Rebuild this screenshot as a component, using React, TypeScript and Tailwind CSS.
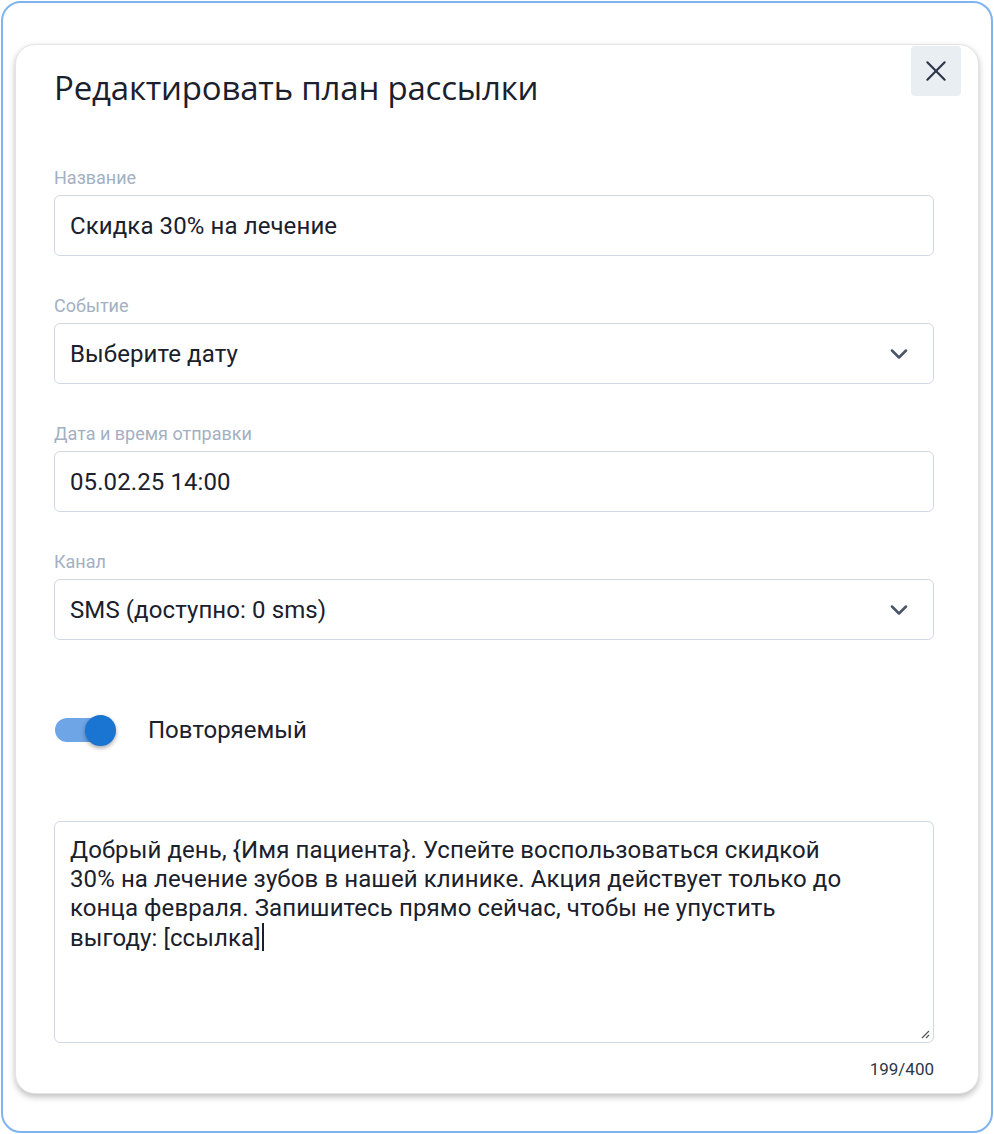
import { useState } from 'react'

const MESSAGE =
  'Добрый день, {Имя пациента}. Успейте воспользоваться скидкой 30% на лечение зубов в нашей клинике. Акция действует только до конца февраля. Запишитесь прямо сейчас, чтобы не упустить выгоду: [ссылка]'

function Chevron() {
  return (
    <svg width="28" height="28" viewBox="0 0 24 24" fill="none" stroke="#4a5568" strokeWidth="2.2" strokeLinecap="round" strokeLinejoin="round">
      <path d="M6 9l6 6 6-6" />
    </svg>
  )
}

function Field({ label, children }: { label: string; children: React.ReactNode }) {
  return (
    <div className="flex flex-col">
      <label className="text-[18px] leading-[20px] text-[#a3b0c2] mb-[7px]">{label}</label>
      {children}
    </div>
  )
}

function TextBox({ value, select }: { value: string; select?: boolean }) {
  return (
    <div className="h-[61px] flex items-center justify-between rounded-[6px] border border-[#cfd8e3] bg-white pl-[15px] pr-[20px]">
      <span className="text-[24px] tracking-[0.1px] text-[#1a202c]">{value}</span>
      {select && <Chevron />}
    </div>
  )
}

export default function App() {
  const [repeat, setRepeat] = useState(true)

  return (
    <div
      className="w-[994px] h-[1134px] bg-white p-[1px]"
      style={{ fontFamily: 'Roboto, "Noto Sans", sans-serif' }}
    >
      <div className="h-full rounded-[20px] border-2 border-[#7fb4ef] pt-[41px] pl-[12px]">
        <div className="relative w-[964px] rounded-[20px] border border-[#e4e4e4] bg-white pl-[38px] pr-[44px] pt-[23px] pb-[14px] shadow-[0_3px_6px_rgba(0,0,0,0.25)]">
          <button className="absolute right-[17px] top-[1px] flex h-[50px] w-[50px] items-center justify-center rounded-[4px] bg-[#e9eef3]">
            <svg width="26" height="26" viewBox="0 0 24 24" fill="none" stroke="#2d3748" strokeWidth="2" strokeLinecap="round">
              <path d="M4 4l16 16M20 4L4 20" />
            </svg>
          </button>

          <h1
            className="text-[33px] leading-[40px] tracking-[-0.2px] text-[#1a202c] mb-[60px]"
            style={{ fontFamily: '"Open Sans", "Noto Sans", sans-serif' }}
          >
            Редактировать план рассылки
          </h1>

          <div className="flex flex-col gap-[40px]">
            <Field label="Название">
              <TextBox value="Скидка 30% на лечение" />
            </Field>
            <Field label="Событие">
              <TextBox value="Выберите дату" select />
            </Field>
            <Field label="Дата и время отправки">
              <TextBox value="05.02.25 14:00" />
            </Field>
            <Field label="Канал">
              <TextBox value="SMS (доступно: 0 sms)" select />
            </Field>
          </div>

          <div className="mt-[70px] flex items-center gap-[32px] h-[40px]">
            <button
              onClick={() => setRepeat(!repeat)}
              className="relative h-[40px] w-[62px] flex items-center"
            >
              <span className="block h-[24px] w-[60px] rounded-full bg-[#6ea5e6] ml-[1px]" />
              <span className="absolute right-[0px] top-[5px] h-[31px] w-[31px] rounded-full bg-[#1a75d2] shadow-[0_2px_4px_rgba(0,0,0,0.35)]" />
            </button>
            <span className="text-[24px] text-[#1a202c]">Повторяемый</span>
          </div>

          <div className="mt-[71px] relative h-[222px] rounded-[6px] border border-[#cfd8e3] bg-white pl-[15px] pr-[78px] pt-[14px]">
            <p className="text-[24px] leading-[29px] tracking-[0.1px] text-[#1a202c]">
              {MESSAGE}
              <span className="inline-block align-[-5px] ml-[1px] h-[28px] w-[2px] bg-[#1a202c]" />
            </p>
            <svg className="absolute right-[3px] bottom-[3px]" width="10" height="10" viewBox="0 0 10 10" stroke="#555" strokeWidth="1.2">
              <path d="M9 2L2 9M9 6L6 9" />
            </svg>
          </div>

          <div className="mt-[16px] text-right text-[17px] leading-[20px] text-[#2d3748]">199/400</div>
        </div>
      </div>
    </div>
  )
}
